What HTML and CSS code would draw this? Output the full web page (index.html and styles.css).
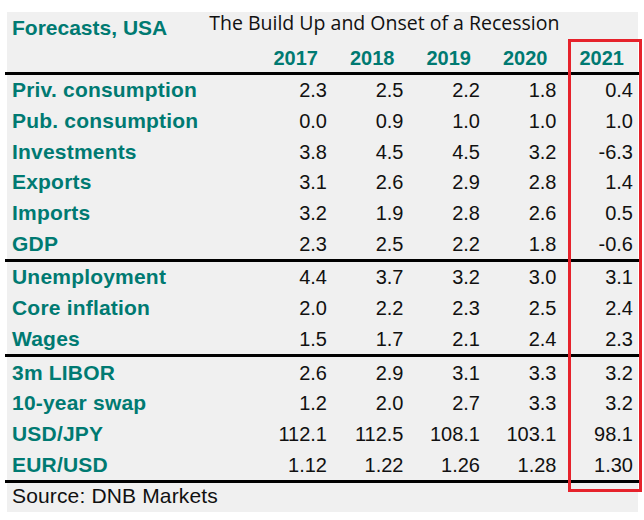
FILE: index.html
```html
<!DOCTYPE html>
<html>
<head>
<meta charset="utf-8">
<link rel="stylesheet" href="styles.css">
</head>
<body>
<div class="sheet">
  <div class="panel">
    <div class="head-top">
      <span class="fc">Forecasts, USA</span>
      <span class="title">The Build Up and Onset of a Recession</span>
    </div>
    <div class="grid years">
      <span></span><span>2017</span><span>2018</span><span>2019</span><span>2020</span><span>2021</span>
    </div>
    <div class="rule"></div>
    <div class="grid rows">
      <span class="lab">Priv. consumption</span><span>2.3</span><span>2.5</span><span>2.2</span><span>1.8</span><span>0.4</span>
      <span class="lab">Pub. consumption</span><span>0.0</span><span>0.9</span><span>1.0</span><span>1.0</span><span>1.0</span>
      <span class="lab">Investments</span><span>3.8</span><span>4.5</span><span>4.5</span><span>3.2</span><span>-6.3</span>
      <span class="lab">Exports</span><span>3.1</span><span>2.6</span><span>2.9</span><span>2.8</span><span>1.4</span>
      <span class="lab">Imports</span><span>3.2</span><span>1.9</span><span>2.8</span><span>2.6</span><span>0.5</span>
      <span class="lab">GDP</span><span>2.3</span><span>2.5</span><span>2.2</span><span>1.8</span><span>-0.6</span>
    </div>
    <div class="rule"></div>
    <div class="grid rows">
      <span class="lab">Unemployment</span><span>4.4</span><span>3.7</span><span>3.2</span><span>3.0</span><span>3.1</span>
      <span class="lab">Core inflation</span><span>2.0</span><span>2.2</span><span>2.3</span><span>2.5</span><span>2.4</span>
      <span class="lab">Wages</span><span>1.5</span><span>1.7</span><span>2.1</span><span>2.4</span><span>2.3</span>
    </div>
    <div class="rule"></div>
    <div class="grid rows">
      <span class="lab">3m LIBOR</span><span>2.6</span><span>2.9</span><span>3.1</span><span>3.3</span><span>3.2</span>
      <span class="lab">10-year swap</span><span>1.2</span><span>2.0</span><span>2.7</span><span>3.3</span><span>3.2</span>
      <span class="lab">USD/JPY</span><span>112.1</span><span>112.5</span><span>108.1</span><span>103.1</span><span>98.1</span>
      <span class="lab">EUR/USD</span><span>1.12</span><span>1.22</span><span>1.26</span><span>1.28</span><span>1.30</span>
    </div>
    <div class="rule"></div>
    <div class="source">Source: DNB Markets</div>
  </div>
  <div class="hilite"></div>
</div>
</body>
</html>
```
FILE: styles.css
```css
html, body {
  margin: 0;
  padding: 0;
  background: #ffffff;
}

.sheet {
  position: relative;
  width: 644px;
  height: 520px;
  padding-top: 12px;
  box-sizing: border-box;
}

.panel {
  margin-left: 7px;
  width: 631px;
  height: 500px;
  background: #f0f0f0;
  font-family: "Liberation Sans", Arial, sans-serif;
  color: #111111;
}

.head-top {
  display: flex;
  align-items: flex-start;
  height: 32px;
  padding-left: 5px;
}

.fc {
  font-weight: bold;
  font-size: 21px;
  color: #007a72;
  line-height: 20px;
  padding-top: 6px;
}

.title {
  font-family: "Open Sans", sans-serif;
  font-size: 19.5px;
  line-height: 20px;
  color: #111111;
  margin-left: 42px;
  margin-top: 1px;
}

.grid {
  display: grid;
  grid-template-columns: 1fr repeat(5, 76.5px);
  padding: 0 5px 0 5px;
}

.years {
  height: 28px;
  font-weight: bold;
  font-size: 20px;
  color: #007a72;
  align-items: center;
}

.years span {
  text-align: right;
  padding-right: 9px;
}

.rule {
  height: 3px;
  background: #000000;
  margin: 0 -2px;
}

.rows {
  grid-auto-rows: 30.7px;
  align-items: center;
  font-size: 20px;
}

.rows span {
  text-align: right;
  line-height: 22px;
}

.rows .lab {
  text-align: left;
  font-weight: bold;
  font-size: 21px;
  letter-spacing: 0.2px;
  color: #007a72;
}

.source {
  padding-left: 5px;
  font-size: 21px;
  letter-spacing: 0.15px;
  line-height: 26px;
  color: #111111;
}

.hilite {
  position: absolute;
  left: 568px;
  top: 39px;
  width: 74px;
  height: 453px;
  box-sizing: border-box;
  border: 3px solid #e6222b;
}
```
